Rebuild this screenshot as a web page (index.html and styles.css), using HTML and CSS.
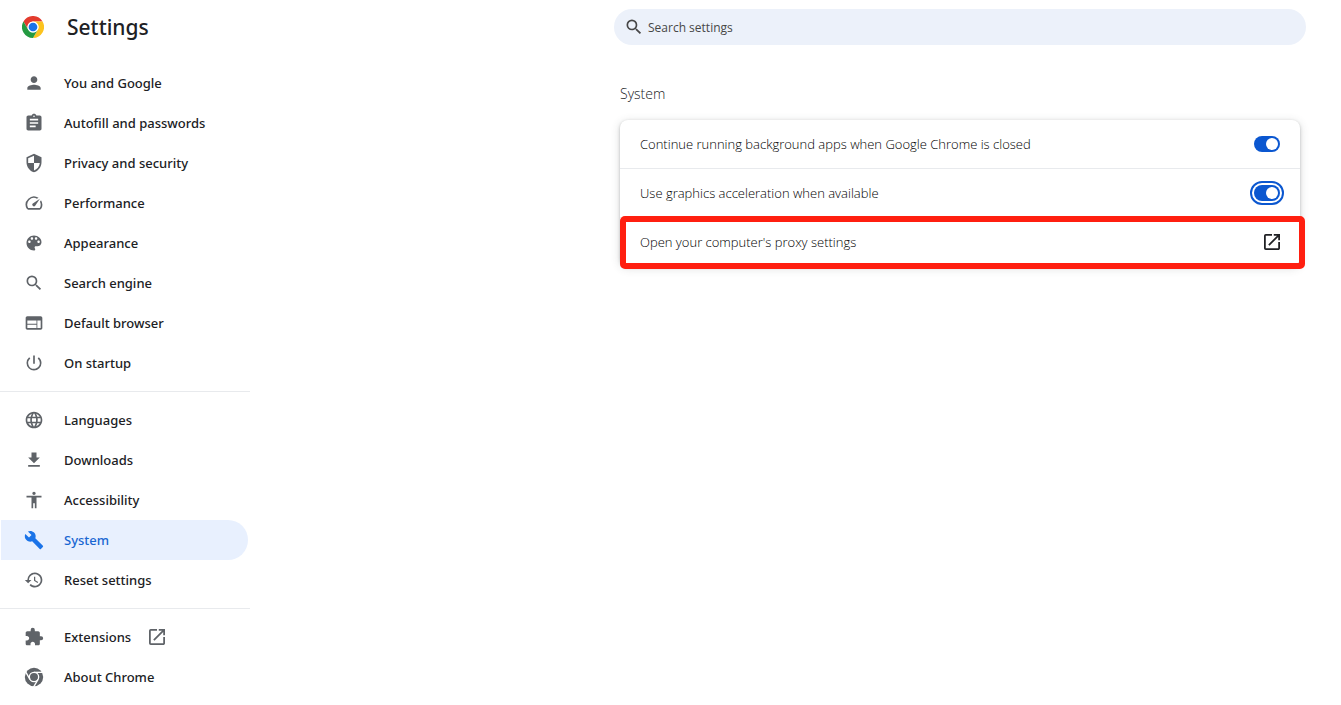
FILE: index.html
```html
<!DOCTYPE html>
<html lang="en">
<head>
  <meta charset="UTF-8">
  <meta name="viewport" content="width=device-width, initial-scale=1.0">
  <title>Settings - System</title>
  <link rel="stylesheet" href="styles.css">
</head>
<body>
  <div class="settings">
    <aside class="sidebar">
      <header class="brand">
        <svg class="logo" viewBox="0 0 48 48" aria-hidden="true">
          <circle cx="24" cy="24" r="24" fill="#fff"/>
          <path fill="#e33b2e" d="M3.2 12A24 24 0 0 1 44.8 12H24a12 12 0 0 0-10.4 18z"/>
          <path fill="#fcc31e" d="M44.8 12A24 24 0 0 1 24 48l10.4-18A12 12 0 0 0 24 12z"/>
          <path fill="#249a41" d="M24 48A24 24 0 0 1 3.2 12l10.4 18a12 12 0 0 0 20.8 0z"/>
          <circle cx="24" cy="24" r="12" fill="#fff"/>
          <circle cx="24" cy="24" r="9.5" fill="#1a73e8"/>
        </svg>
        <h1>Settings</h1>
      </header>
      <nav class="menu">
        <a class="menu-item" href="#people">
          <svg viewBox="0 0 24 24"><path d="M12 12c2.2 0 4-1.8 4-4s-1.8-4-4-4-4 1.8-4 4 1.8 4 4 4zm0 2c-2.7 0-8 1.3-8 4v2h16v-2c0-2.700-5.300-4-8-4z"/></svg>
          You and Google
        </a>
        <a class="menu-item" href="#autofill">
          <svg viewBox="0 0 24 24"><path d="M19 3h-4.180C14.400 1.840 13.300 1 12 1s-2.400.84-2.820 2H5c-1.100 0-2 .9-2 2v14c0 1.100.9 2 2 2h14c1.100 0 2-.9 2-2V5c0-1.100-.9-2-2-2zm-7 0c.55 0 1 .45 1 1s-.45 1-1 1-1-.45-1-1 .45-1 1-1zm2 14H7v-2h7v2zm3-4H7v-2h10v2zm0-4H7V7h10v2z"/></svg>
          Autofill and passwords
        </a>
        <a class="menu-item" href="#privacy">
          <svg viewBox="0 0 24 24"><path d="M12 1 3 5v6c0 5.550 3.840 10.740 9 12 5.160-1.260 9-6.450 9-12V5l-9-4zm0 10.990h7c-.53 4.120-3.280 7.790-7 8.940V12H5V6.300l7-3.110v8.800z"/></svg>
          Privacy and security
        </a>
        <a class="menu-item" href="#performance">
          <svg viewBox="0 0 24 24"><path d="m20.380 8.570-1.230 1.850a8 8 0 0 1-.22 7.580H5.070A8 8 0 0 1 15.580 6.850l1.850-1.230A10 10 0 0 0 3.350 19a2 2 0 0 0 1.720 1h13.850a2 2 0 0 0 1.740-1 10 10 0 0 0-.27-10.440zm-9.790 6.840a2 2 0 0 0 2.830 0l5.660-8.490-8.490 5.660a2 2 0 0 0 0 2.830z"/></svg>
          Performance
        </a>
        <a class="menu-item" href="#appearance">
          <svg viewBox="0 0 24 24"><path d="M12 3c-4.970 0-9 4.030-9 9s4.030 9 9 9c.83 0 1.500-.67 1.500-1.500 0-.39-.15-.74-.39-1.010-.23-.26-.38-.61-.38-.99 0-.83.67-1.500 1.500-1.500H16c2.760 0 5-2.240 5-5 0-4.420-4.030-8-9-8zm-5.500 9c-.83 0-1.500-.67-1.500-1.500S5.670 9 6.500 9 8 9.670 8 10.500 7.330 12 6.500 12zm3-4C8.670 8 8 7.330 8 6.500S8.670 5 9.500 5s1.500.67 1.500 1.500S10.330 8 9.500 8zm5 0c-.83 0-1.500-.67-1.500-1.500S13.670 5 14.500 5s1.500.67 1.500 1.500S15.330 8 14.500 8zm3 4c-.83 0-1.500-.67-1.500-1.500S16.670 9 17.500 9s1.500.67 1.500 1.500-.67 1.500-1.500 1.500z"/></svg>
          Appearance
        </a>
        <a class="menu-item" href="#search">
          <svg viewBox="0 0 24 24"><path d="M15.500 14h-.79l-.28-.27A6.470 6.470 0 0 0 16 9.500 6.500 6.500 0 1 0 9.500 16c1.610 0 3.090-.59 4.230-1.570l.27.28v.79l5 4.990L20.490 19l-4.990-5zm-6 0C7.010 14 5 11.990 5 9.500S7.010 5 9.500 5 14 7.010 14 9.500 11.990 14 9.500 14z"/></svg>
          Search engine
        </a>
        <a class="menu-item" href="#browser">
          <svg viewBox="0 0 24 24"><path d="M20 4H4c-1.100 0-2 .9-2 2v12c0 1.100.9 2 2 2h16c1.100 0 2-.9 2-2V6c0-1.100-.9-2-2-2zm-5 14H4v-4h11v4zm0-5H4V9h11v4zm5 5h-4V9h4v9z"/></svg>
          Default browser
        </a>
        <a class="menu-item" href="#startup">
          <svg viewBox="0 0 24 24"><path d="M13 3h-2v10h2V3zm4.830 2.170-1.420 1.420A6.920 6.920 0 0 1 19 12c0 3.870-3.130 7-7 7A6.995 6.995 0 0 1 7.580 6.580L6.170 5.170A8.932 8.932 0 0 0 3 12a9 9 0 0 0 18 0c0-2.740-1.230-5.180-3.170-6.830z"/></svg>
          On startup
        </a>
        <hr>
        <a class="menu-item" href="#languages">
          <svg viewBox="0 0 24 24"><path d="M11.990 2C6.470 2 2 6.480 2 12s4.470 10 9.990 10C17.520 22 22 17.520 22 12S17.520 2 11.990 2zm6.930 6h-2.950a15.650 15.650 0 0 0-1.380-3.560A8.030 8.030 0 0 1 18.920 8zM12 4.040c.83 1.200 1.480 2.530 1.910 3.960h-3.820c.43-1.430 1.080-2.760 1.910-3.960zM4.260 14C4.100 13.360 4 12.690 4 12s.1-1.360.26-2h3.380c-.08.66-.14 1.320-.14 2s.06 1.340.14 2H4.260zm.82 2h2.950c.32 1.250.78 2.450 1.380 3.560A7.987 7.987 0 0 1 5.080 16zm2.950-8H5.080a7.987 7.987 0 0 1 4.330-3.560A15.650 15.650 0 0 0 8.030 8zM12 19.960c-.83-1.200-1.480-2.530-1.910-3.960h3.820c-.43 1.430-1.080 2.760-1.910 3.960zM14.340 14H9.660c-.09-.66-.16-1.320-.16-2s.07-1.350.16-2h4.680c.09.65.16 1.320.16 2s-.07 1.340-.16 2zm.25 5.560c.6-1.110 1.060-2.310 1.380-3.560h2.950a8.030 8.030 0 0 1-4.330 3.560zM16.360 14c.08-.66.14-1.320.14-2s-.06-1.340-.14-2h3.380c.16.64.26 1.310.26 2s-.1 1.360-.26 2h-3.380z"/></svg>
          Languages
        </a>
        <a class="menu-item" href="#downloads">
          <svg viewBox="0 0 24 24"><path d="M19 9h-4V3H9v6H5l7 7 7-7zM5 18v2h14v-2H5z"/></svg>
          Downloads
        </a>
        <a class="menu-item" href="#accessibility">
          <svg viewBox="0 0 24 24"><path d="M12 2c1.100 0 2 .9 2 2s-.9 2-2 2-2-.9-2-2 .9-2 2-2zm9 7h-6v13h-2v-6h-2v6H9V9H3V7h18v2z"/></svg>
          Accessibility
        </a>
        <a class="menu-item selected" href="#system" aria-current="page">
          <svg viewBox="0 0 24 24"><path d="m22.700 19-9.100-9.100c.9-2.300.4-5-1.500-6.900-2-2-5-2.400-7.400-1.300L9 6 6 9 1.600 4.700C.4 7.100.9 10.100 2.900 12.100c1.900 1.900 4.600 2.400 6.900 1.500l9.100 9.100c.4.4 1 .4 1.400 0l2.300-2.300c.5-.4.5-1.100.1-1.400z"/></svg>
          System
        </a>
        <a class="menu-item" href="#reset">
          <svg viewBox="0 0 24 24"><path d="M13 3a9 9 0 0 0-9 9H1l3.890 3.890.07.14L9 12H6c0-3.870 3.130-7 7-7s7 3.130 7 7-3.130 7-7 7a6.940 6.940 0 0 1-4.940-2.060l-1.420 1.420A9 9 0 1 0 13 3zm-1 5v5l4.280 2.540.72-1.210-3.500-2.080V8H12z"/></svg>
          Reset settings
        </a>
        <hr>
        <a class="menu-item" href="#extensions">
          <svg viewBox="0 0 24 24"><path d="M20.500 11H19V7c0-1.100-.9-2-2-2h-4V3.500a2.500 2.500 0 0 0-5 0V5H4c-1.100 0-1.990.9-1.990 2v3.800H3.500c1.490 0 2.700 1.210 2.700 2.700s-1.210 2.700-2.700 2.700H2V20c0 1.100.9 2 2 2h3.800v-1.500c0-1.490 1.210-2.700 2.700-2.700s2.700 1.210 2.700 2.700V22H17c1.100 0 2-.9 2-2v-4h1.500a2.500 2.500 0 0 0 0-5z"/></svg>
          Extensions
          <svg class="open-icon" viewBox="3 3 18 18"><path d="M19 19H5V5h7V3H5a2 2 0 0 0-2 2v14a2 2 0 0 0 2 2h14c1.100 0 2-.9 2-2v-7h-2v7zM14 3v2h3.590l-9.830 9.830 1.410 1.410L19 6.410V10h2V3h-7z"/></svg>
        </a>
        <a class="menu-item" href="#about">
          <svg viewBox="0 0 24 24">
            <circle cx="12" cy="12" r="11"/>
            <g fill="none" stroke="#fff" stroke-width="1.600">
              <circle cx="12" cy="12" r="5.600"/>
              <path d="M12 6.400h11"/>
              <path d="M12 6.400h11" transform="rotate(120 12 12)"/>
              <path d="M12 6.400h11" transform="rotate(240 12 12)"/>
            </g>
          </svg>
          About Chrome
        </a>
      </nav>
    </aside>

    <main class="content">
      <label class="search">
        <svg viewBox="0 0 24 24" aria-hidden="true"><path d="M15.500 14h-.79l-.28-.27A6.470 6.470 0 0 0 16 9.500 6.500 6.500 0 1 0 9.500 16c1.610 0 3.090-.59 4.230-1.570l.27.28v.79l5 4.990L20.490 19l-4.990-5zm-6 0C7.010 14 5 11.990 5 9.500S7.010 5 9.500 5 14 7.010 14 9.500 11.990 14 9.500 14z"/></svg>
        <input type="text" placeholder="Search settings" aria-label="Search settings">
      </label>
      <section class="section">
        <h2>System</h2>
        <div class="card">
          <div class="row">
            <label for="background-apps">Continue running background apps when Google Chrome is closed</label>
            <input class="toggle" type="checkbox" id="background-apps" checked>
          </div>
          <div class="row">
            <label for="graphics">Use graphics acceleration when available</label>
            <input class="toggle ring" type="checkbox" id="graphics" checked>
          </div>
          <button class="row highlight" type="button">
            Open your computer's proxy settings
            <svg class="open-icon" viewBox="3 3 18 18" aria-hidden="true"><path d="M19 19H5V5h7V3H5a2 2 0 0 0-2 2v14a2 2 0 0 0 2 2h14c1.100 0 2-.9 2-2v-7h-2v7zM14 3v2h3.590l-9.830 9.830 1.410 1.410L19 6.410V10h2V3h-7z"/></svg>
          </button>
        </div>
      </section>
    </main>
  </div>
</body>
</html>
```
FILE: styles.css
```css
:root {
  --text: #202124;
  --icon: #5f6368;
  --blue: #0b57d0;
  --line: #e8eaed;
}
* {
  box-sizing: border-box;
}
body {
  margin: 0;
  background-color: #fff;
  color: var(--text);
  font-family: 'Noto Sans', 'Open Sans', sans-serif;
  font-size: 13px;
  line-height: 20px;
}
.settings {
  display: flex;
}
.sidebar {
  width: 250px;
  flex-shrink: 0;
}
.brand {
  display: flex;
  align-items: center;
  gap: 23px;
  height: 54px;
  padding-left: 22px;
}
.brand h1 {
  margin: 0;
  font-size: 21px;
  font-weight: 500;
}
.logo {
  width: 22px;
  height: 22px;
}
.menu {
  padding-top: 9px;
}
.menu-item {
  display: flex;
  align-items: center;
  gap: 20px;
  height: 40px;
  margin: 0 2px 0 1px;
  padding-left: 23px;
  border-radius: 0 20px 20px 0;
  color: var(--text);
  font-weight: 500;
  text-decoration: none;
}
.menu-item svg {
  width: 20px;
  height: 20px;
  fill: var(--icon);
}
.open-icon {
  width: 16px;
  height: 16px;
  fill: var(--text);
}
.menu-item .open-icon {
  width: 16px;
  height: 16px;
  margin-left: -2px;
}
.menu-item.selected {
  background-color: #e8f0fe;
  color: #1967d2;
}
.menu-item.selected svg {
  fill: #1a73e8;
}
.menu hr {
  height: 1px;
  margin: 8px 0;
  border: none;
  background-color: var(--line);
}
.content {
  flex: 1;
  max-width: 692px;
  margin: 9px 35px 0 auto;
  font-family: 'Open Sans', sans-serif;
}
.search {
  display: flex;
  align-items: center;
  gap: 4px;
  height: 36px;
  padding: 0 10px;
  border-radius: 18px;
  background-color: #ecf1fa;
}
.search svg {
  width: 20px;
  height: 20px;
  fill: #474747;
}
.search input {
  flex: 1;
  padding: 0;
  border: none;
  outline: none;
  background: none;
  font-family: inherit;
  font-size: 12px;
  font-weight: 500;
}
.search input::placeholder {
  color: #474747;
}
.section {
  padding: 39px 6px 0;
}
.section h2 {
  margin: 0 0 16px;
  font-size: 14px;
  font-weight: 300;
}
.card {
  border-radius: 8px;
  background-color: #fff;
  box-shadow: 0 1px 3px rgba(60, 64, 67, 0.3), 0 2px 8px 1px rgba(60, 64, 67, 0.15);
  color: #000;
  font-weight: 300;
}
.row {
  display: flex;
  align-items: center;
  justify-content: space-between;
  width: 100%;
  height: 48px;
  padding: 0 20px;
}
.row + .row {
  height: 49px;
  border-top: 1px solid var(--line);
}
button.row {
  position: relative;
  border: none;
  background: none;
  color: inherit;
  font: inherit;
  text-align: left;
  cursor: pointer;
}
.highlight::after {
  content: '';
  position: absolute;
  inset: -2px -5px -3px 0;
  border: 6px solid #ff1f10;
  border-radius: 5px;
}
.toggle {
  appearance: none;
  display: flex;
  align-items: center;
  justify-content: flex-end;
  width: 26px;
  height: 16px;
  margin: 0;
  padding: 2px;
  border-radius: 8px;
  background-color: #80868b;
}
.toggle::before {
  content: '';
  width: 12px;
  height: 12px;
  border-radius: 50%;
  background-color: #fff;
}
.toggle:checked {
  background-color: var(--blue);
}
.toggle:not(:checked) {
  justify-content: flex-start;
}
.toggle.ring {
  outline: 2px solid var(--blue);
  outline-offset: 2px;
}
```
